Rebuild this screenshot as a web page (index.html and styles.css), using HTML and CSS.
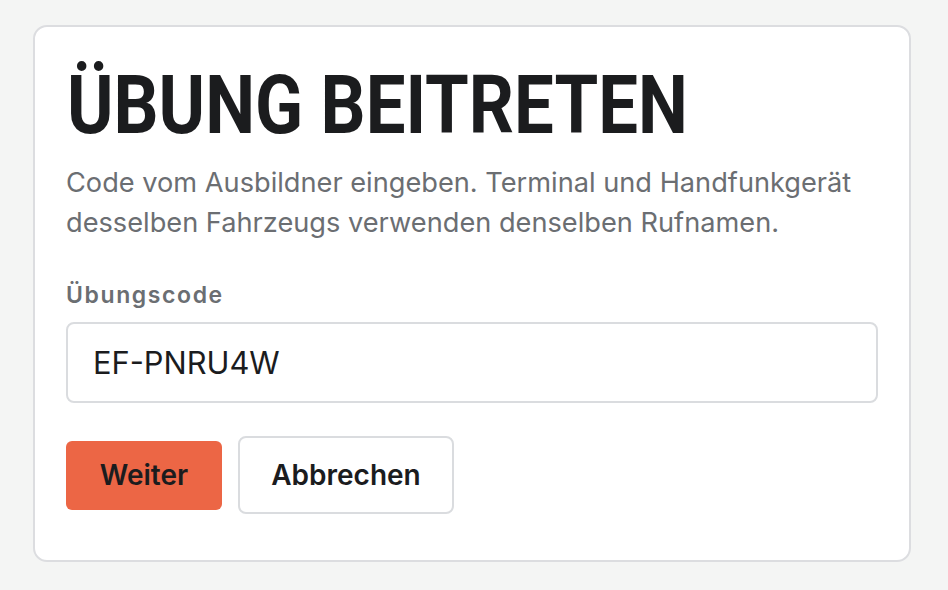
FILE: index.html
```html
<!DOCTYPE html>
<html lang="de">
<head>
<meta charset="utf-8">
<title>Übung beitreten</title>
<link rel="stylesheet" href="styles.css">
</head>
<body>
<main class="page">
  <section class="card">
    <h1 class="title"><span class="title-text">ÜBUNG BEITRETEN</span></h1>
    <p class="desc">Code vom Ausbildner eingeben. Terminal und Handfunkgerät desselben Fahrzeugs verwenden denselben Rufnamen.</p>
    <label class="label" for="code">Übungscode</label>
    <input class="input" id="code" type="text" value="EF-PNRU4W">
    <div class="actions">
      <button class="btn btn-primary" type="button">Weiter</button>
      <button class="btn btn-secondary" type="button">Abbrechen</button>
    </div>
  </section>
</main>
</body>
</html>
```
FILE: styles.css
```css
html, body {
  margin: 0;
  padding: 0;
  background: #f4f5f4;
}
body {
  font-family: Inter, "Noto Sans", sans-serif;
  color: #1b1c1e;
}
.page {
  padding: 25px 37px 26px 33px;
}
.card {
  background: #ffffff;
  border: 2px solid #dcdde0;
  border-radius: 14px;
  padding: 37px 31px 46px 31px;
  display: flex;
  flex-direction: column;
}
.title {
  margin: 0;
  font-family: Roboto, "Liberation Sans", sans-serif;
  font-weight: 700;
  font-size: 82px;
  line-height: 82px;
  color: #1b1c1e;
  white-space: nowrap;
}
.title-text {
  display: inline-block;
  transform: scaleX(0.861);
  transform-origin: left center;
  margin-left: 1px;
}
.desc {
  margin: 17px 0 0 0;
  font-size: 27.2px;
  line-height: 40px;
  color: #6b6e72;
  max-width: 810px;
}
.label {
  margin-top: 38px;
  font-size: 23px;
  font-weight: 600;
  color: #6b6e72;
  letter-spacing: 1.6px;
  line-height: 28px;
}
.input {
  margin-top: 13px;
  height: 81px;
  box-sizing: border-box;
  border: 2px solid #dadcdf;
  border-radius: 8px;
  padding: 0 25px;
  font-family: Inter, "Noto Sans", sans-serif;
  font-size: 30.8px;
  color: #1b1c1e;
  background: #fff;
  outline: none;
}
.actions {
  margin-top: 33px;
  display: flex;
  align-items: center;
  gap: 16px;
}
.btn {
  font-family: Inter, "Noto Sans", sans-serif;
  font-size: 28px;
  font-weight: 600;
  color: #1b1c1e;
  cursor: pointer;
  box-sizing: border-box;
  padding: 0;
}
.btn-primary {
  background: #ec6645;
  border: none;
  border-radius: 6px;
  height: 69px;
  width: 156px;
}
.btn-secondary {
  background: #ffffff;
  border: 2px solid #dadcdf;
  border-radius: 8px;
  height: 78px;
  width: 216px;
}
```
